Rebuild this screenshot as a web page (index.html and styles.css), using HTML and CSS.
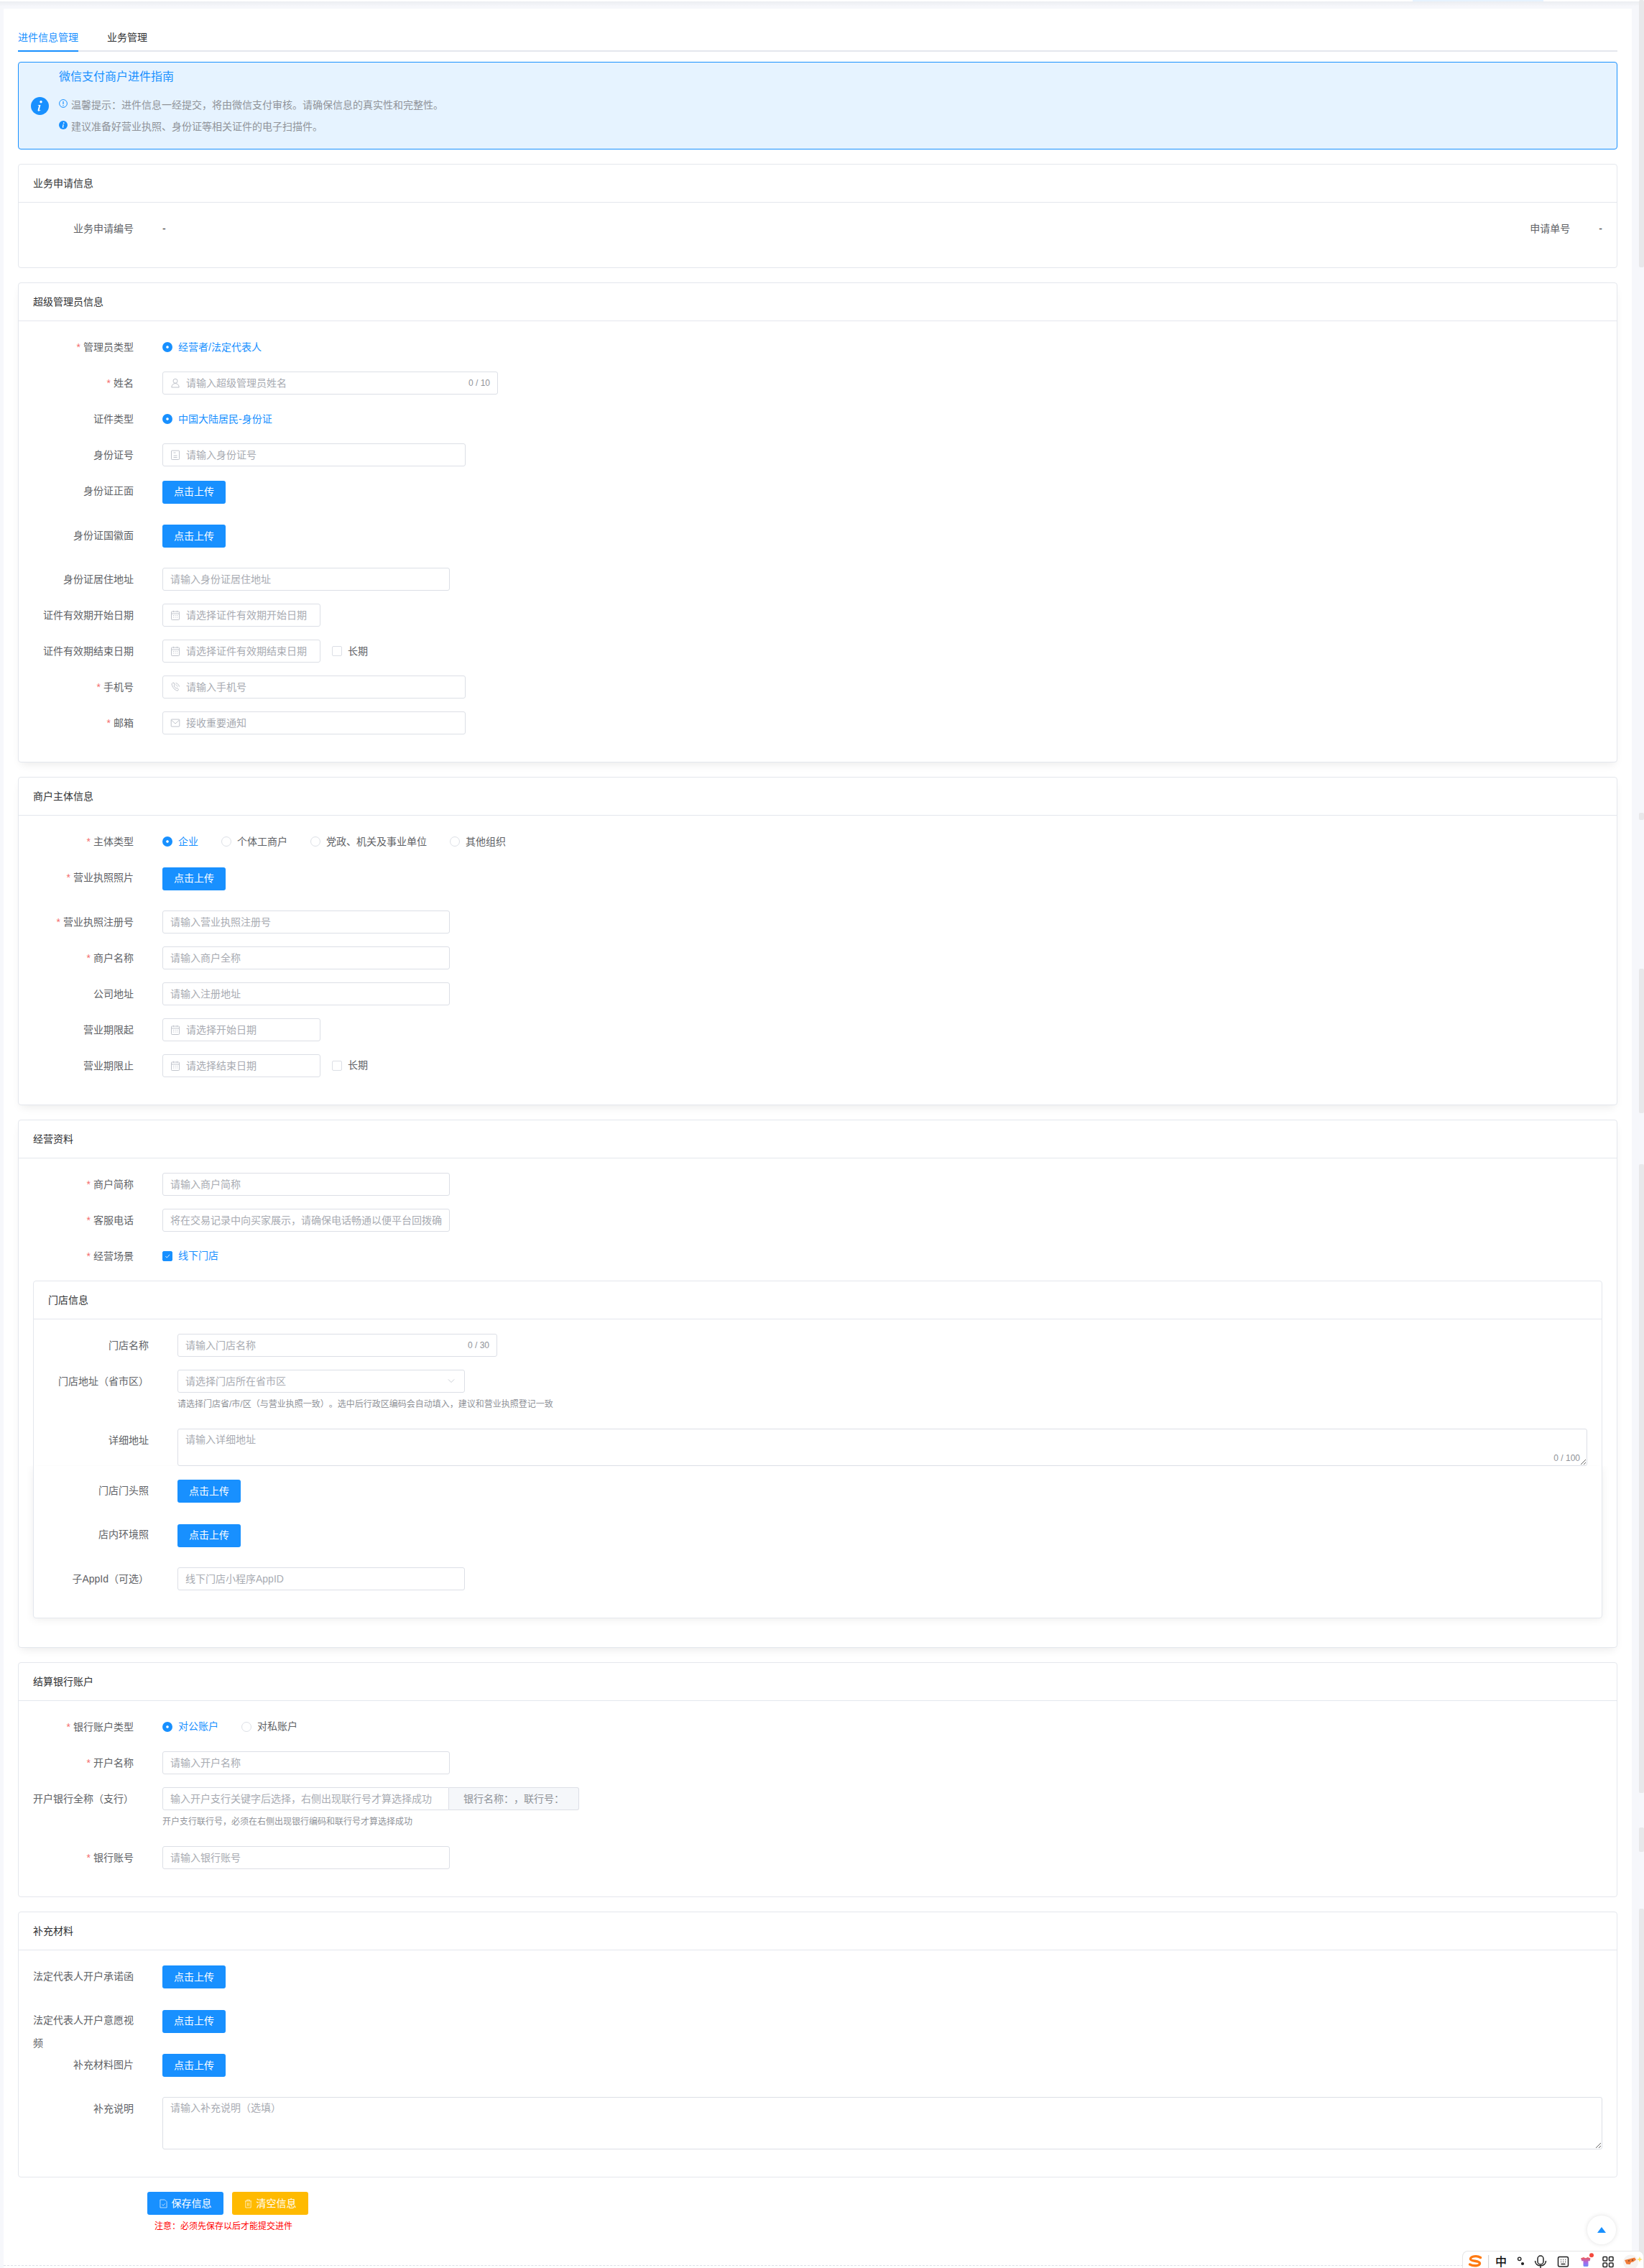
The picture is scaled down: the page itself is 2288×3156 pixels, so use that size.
FILE: index.html
```html
<!DOCTYPE html>
<html lang="zh-CN">
<head>
<meta charset="utf-8">
<title>进件信息管理</title>
<link rel="stylesheet" href="styles.css">
</head>
<body>
<svg class="sprite" aria-hidden="true">
  <symbol id="i-user" viewBox="0 0 14 14"><circle cx="7" cy="4.2" r="3" /><path d="M1.8 13c0-3.2 2.3-5.4 5.2-5.4s5.2 2.2 5.2 5.4z"/></symbol>
  <symbol id="i-doc" viewBox="0 0 14 14"><rect x="1.5" y="1" width="11" height="12.5" rx=".8"/><path d="M4.5 4h3M4.5 8h5M4.5 10.500h5"/></symbol>
  <symbol id="i-cal" viewBox="0 0 14 14"><rect x="1.500" y="2" width="11" height="11.500" rx=".8"/><path d="M1.500 5h11M4.500 .8v2M9.500 .8v2M4 7.500h1M6.500 7.500h1M9 7.500h1M4 10h1M6.500 10h1M9 10h1"/></symbol>
  <symbol id="i-phone" viewBox="0 0 14 14"><path d="M3 1.500 5 1l1.300 3-1.200 1c.5 1.500 1.500 3 3 4l1.200-.9 2.200 2.400-1.300 1.700C6 11.500 2.500 7 2 2.500z"/><path d="M7.500 1.500c2.500.3 4.500 2.300 5 5M7.500 4c1.300.2 2.300 1.200 2.600 2.500"/></symbol>
  <symbol id="i-mail" viewBox="0 0 14 14"><rect x="1.200" y="2" width="11.600" height="10" rx=".8"/><path d="M1.500 3 7 8l5.500-5"/></symbol>
  <symbol id="i-save" viewBox="0 0 12 14"><path d="M1 1h7l3 3v9H1z"/><path d="M3.800 8l1.700 1.800 2.800-3"/></symbol>
  <symbol id="i-trash" viewBox="0 0 12 14"><path d="M1 3h10M4 3V1.200h4V3M2 3v10h8V3M5 5.500v5M7 5.500v5"/></symbol>
</svg>

<div class="topbar"><span class="toptab"></span></div>

<main class="page">
  <nav class="tabs">
    <a class="tab active">进件信息管理</a>
    <a class="tab">业务管理</a>
  </nav>

  <section class="alert">
    <svg class="alert-icon" viewBox="0 0 25 25"><circle cx="12.500" cy="12.500" r="12.500" fill="#1890ff"/><circle cx="14" cy="6.800" r="1.700" fill="#fff"/><path d="M10 11h3.500l-1.800 7c-.1.600.4.700 1.700-.2l.2.500c-1.600 1.500-4.300 2.100-4-.1l1.500-5.800c-.3-.8-.8-.5-1.400-.4z" fill="#fff"/></svg>
    <div class="alert-body">
      <h2 class="alert-title">微信支付商户进件指南</h2>
      <p class="alert-line">
        <svg class="mini" viewBox="0 0 12 12"><circle cx="6" cy="6" r="5.400" fill="none" stroke="#1890ff" stroke-width="1"/><path d="M6 3v4" stroke="#1890ff" stroke-width="1.200"/><circle cx="6" cy="8.800" r=".7" fill="#1890ff"/></svg>
        <span>温馨提示&#xFF1A;进件信息一经提交&#xFF0C;将由微信支付审核。请确保信息的真实性和完整性。</span>
      </p>
      <p class="alert-line">
        <svg class="mini" viewBox="0 0 12 12"><circle cx="6" cy="6" r="6" fill="#1890ff"/><circle cx="6.700" cy="3.200" r=".9" fill="#fff"/><path d="M5 5.200h1.900L6 9.200l1-.4-.2.500c-1 .6-2.200.6-2-.3l.8-3.300-.7-.1z" fill="#fff"/></svg>
        <span>建议准备好营业执照、身份证等相关证件的电子扫描件。</span>
      </p>
    </div>
  </section>

  <section class="card">
    <header class="card-head">业务申请信息</header>
    <div class="card-body">
      <div class="row between">
        <div class="pair"><span class="label">业务申请编号</span><span class="value">-</span></div>
        <div class="pair"><span class="label">申请单号</span><span class="value">-</span></div>
      </div>
    </div>
  </section>

  <section class="card raised">
    <header class="card-head">超级管理员信息</header>
    <div class="card-body">
      <div class="row"><span class="label req">管理员类型</span><div class="choices"><label class="radio on"><i></i>经营者/法定代表人</label></div></div>
      <div class="row"><span class="label req">姓名</span><div class="input w467"><svg class="pre"><use href="#i-user"/></svg><input placeholder="请输入超级管理员姓名"><span class="count">0 / 10</span></div></div>
      <div class="row"><span class="label">证件类型</span><div class="choices"><label class="radio on"><i></i>中国大陆居民-身份证</label></div></div>
      <div class="row"><span class="label">身份证号</span><div class="input w422"><svg class="pre"><use href="#i-doc"/></svg><input placeholder="请输入身份证号"></div></div>
      <div class="row up"><span class="label">身份证正面</span><button class="btn-up">点击上传</button></div>
      <div class="row up"><span class="label">身份证国徽面</span><button class="btn-up">点击上传</button></div>
      <div class="row"><span class="label">身份证居住地址</span><div class="input w400"><input placeholder="请输入身份证居住地址"></div></div>
      <div class="row"><span class="label">证件有效期开始日期</span><div class="input w220"><svg class="pre"><use href="#i-cal"/></svg><input placeholder="请选择证件有效期开始日期"></div></div>
      <div class="row"><span class="label">证件有效期结束日期</span><div class="input w220"><svg class="pre"><use href="#i-cal"/></svg><input placeholder="请选择证件有效期结束日期"></div><label class="check long"><i></i>长期</label></div>
      <div class="row"><span class="label req">手机号</span><div class="input w422"><svg class="pre"><use href="#i-phone"/></svg><input placeholder="请输入手机号"></div></div>
      <div class="row"><span class="label req">邮箱</span><div class="input w422"><svg class="pre"><use href="#i-mail"/></svg><input placeholder="接收重要通知"></div></div>
    </div>
  </section>

  <section class="card raised">
    <header class="card-head">商户主体信息</header>
    <div class="card-body">
      <div class="row"><span class="label req">主体类型</span><div class="choices"><label class="radio on"><i></i>企业</label><label class="radio"><i></i>个体工商户</label><label class="radio"><i></i>党政、机关及事业单位</label><label class="radio"><i></i>其他组织</label></div></div>
      <div class="row up"><span class="label req">营业执照照片</span><button class="btn-up">点击上传</button></div>
      <div class="row"><span class="label req">营业执照注册号</span><div class="input w400"><input placeholder="请输入营业执照注册号"></div></div>
      <div class="row"><span class="label req">商户名称</span><div class="input w400"><input placeholder="请输入商户全称"></div></div>
      <div class="row"><span class="label">公司地址</span><div class="input w400"><input placeholder="请输入注册地址"></div></div>
      <div class="row"><span class="label">营业期限起</span><div class="input w220"><svg class="pre"><use href="#i-cal"/></svg><input placeholder="请选择开始日期"></div></div>
      <div class="row"><span class="label">营业期限止</span><div class="input w220"><svg class="pre"><use href="#i-cal"/></svg><input placeholder="请选择结束日期"></div><label class="check long"><i></i>长期</label></div>
    </div>
  </section>

  <section class="card raised holder">
    <header class="card-head">经营资料</header>
    <div class="card-body">
      <div class="row"><span class="label req">商户简称</span><div class="input w400"><input placeholder="请输入商户简称"></div></div>
      <div class="row"><span class="label req">客服电话</span><div class="input w400"><input placeholder="将在交易记录中向买家展示&#xFF0C;请确保电话畅通以便平台回拨确认"></div></div>
      <div class="row"><span class="label req">经营场景</span><div class="choices"><label class="check on"><i><svg viewBox="0 0 14 14"><path d="M4 7l2.200 2.500L10.500 4.500" fill="none" stroke="#fff" stroke-width="1"/></svg></i>线下门店</label></div></div>

      <section class="card store">
        <header class="card-head">门店信息</header>
        <div class="card-body">
          <div class="row"><span class="label">门店名称</span><div class="input w445"><input placeholder="请输入门店名称"><span class="count">0 / 30</span></div></div>
          <div class="row"><span class="label">门店地址&#xFF08;省市区&#xFF09;</span>
            <div class="stack">
              <div class="input w400"><input placeholder="请选择门店所在省市区"><svg class="chev" viewBox="0 0 12 8"><path d="M1 1.500l5 5 5-5" fill="none" stroke="#c0c4cc"/></svg></div>
              <p class="hint">请选择门店省/市/区&#xFF08;与营业执照一致&#xFF09;。选中后行政区编码会自动填入&#xFF0C;建议和营业执照登记一致</p>
            </div>
          </div>
          <div class="row"><span class="label">详细地址</span>
            <div class="area-wrap"><textarea class="area short" placeholder="请输入详细地址"></textarea><span class="count area-count">0 / 100</span></div>
          </div>
          <div class="row up"><span class="label">门店门头照</span><button class="btn-up">点击上传</button></div>
          <div class="row up"><span class="label">店内环境照</span><button class="btn-up">点击上传</button></div>
          <div class="row"><span class="label">子AppId&#xFF08;可选&#xFF09;</span><div class="input w400"><input placeholder="线下门店小程序AppID"></div></div>
        </div>
      </section>
    </div>
  </section>

  <section class="card">
    <header class="card-head">结算银行账户</header>
    <div class="card-body">
      <div class="row"><span class="label req">银行账户类型</span><div class="choices"><label class="radio on"><i></i>对公账户</label><label class="radio"><i></i>对私账户</label></div></div>
      <div class="row"><span class="label req">开户名称</span><div class="input w400"><input placeholder="请输入开户名称"></div></div>
      <div class="row"><span class="label">开户银行全称&#xFF08;支行&#xFF09;</span>
        <div class="stack">
          <div class="group">
            <div class="input w400 joined"><input placeholder="输入开户支行关键字后选择&#xFF0C;右侧出现联行号才算选择成功"></div>
            <div class="append">银行名称&#xFF1A;&#xFF0C;联行号&#xFF1A;</div>
          </div>
          <p class="hint">开户支行联行号&#xFF0C;必须在右侧出现银行编码和联行号才算选择成功</p>
        </div>
      </div>
      <div class="row"><span class="label req">银行账号</span><div class="input w400"><input placeholder="请输入银行账号"></div></div>
    </div>
  </section>

  <section class="card">
    <header class="card-head">补充材料</header>
    <div class="card-body">
      <div class="row up"><span class="label">法定代表人开户承诺函</span><button class="btn-up">点击上传</button></div>
      <div class="row up"><span class="label">法定代表人开户意愿视频</span><button class="btn-up">点击上传</button></div>
      <div class="row up"><span class="label">补充材料图片</span><button class="btn-up">点击上传</button></div>
      <div class="row"><span class="label">补充说明</span><div class="area-wrap"><textarea class="area tall" placeholder="请输入补充说明&#xFF08;选填&#xFF09;"></textarea></div></div>
    </div>
  </section>

  <div class="actions">
    <button class="btn save"><svg class="btn-ico"><use href="#i-save"/></svg>保存信息</button>
    <button class="btn clear"><svg class="btn-ico"><use href="#i-trash"/></svg>清空信息</button>
  </div>
  <p class="notice">注意&#xFF1A;必须先保存以后才能提交进件</p>
</main>
<div class="dash"></div>

<div class="scroll" aria-hidden="true">
  <span class="thumb t1"></span><span class="thumb t2"></span><span class="thumb t3"></span>
  <span class="thumb t4"></span><span class="thumb t5"></span><span class="thumb t6"></span>
</div>

<button class="totop" aria-label="top"><svg viewBox="0 0 12 8"><path d="M6 0l6 8H0z" fill="#1890ff"/></svg></button>

<div class="ime">
  <svg viewBox="0 0 253 24" width="253" height="24">
    <defs><linearGradient id="shirt" x1="0" y1="0" x2="0" y2="1"><stop offset="0" stop-color="#f2594f"/><stop offset=".55" stop-color="#a866e8"/><stop offset="1" stop-color="#6f8dfb"/></linearGradient></defs>
    <path d="M25.500 9.500C20 6 11.500 8 11.500 11.500c0 3.500 13 2 13 6 0 3.500-8.500 4.500-14 1.500" fill="none" stroke="#ff7a12" stroke-width="3.400" stroke-linecap="round"/>
    <path d="M36.700 6v18" stroke="#ccc"/>
    <text x="54" y="20.500" text-anchor="middle" class="ime-zh">中</text>
    <circle cx="79.700" cy="11.300" r="2.200" fill="none" stroke="#222" stroke-width="1.400"/>
    <circle cx="84" cy="18" r="2.100" fill="#222"/>
    <g fill="none" stroke="#222" stroke-width="1.500">
      <rect x="105" y="7" width="8" height="12" rx="4"/>
      <path d="M101.500 14c0 9 15 9 15 0M109 20.500V24"/>
      <rect x="133.500" y="8.500" width="14" height="13.500" rx="2"/>
      <path d="M137 12.500h.8M140 12.500h.8M143 12.500h.8M137 15.500h.8M140 15.500h.8M143 15.500h.8M137.500 18.500h6"/>
      <rect x="196" y="8.500" width="5.500" height="5.500" rx="1"/><rect x="204.500" y="8.500" width="5.500" height="5.500" rx="1"/>
      <rect x="196" y="17" width="5.500" height="5.500" rx="1"/><rect x="204.500" y="17" width="5.500" height="5.500" rx="1"/>
    </g>
    <path d="M165 10.500l4-1.500c1.500 1.500 4 1.500 5.500 0l4 1.500-1 4-2-.5v6.500c0 1.200-1 1.500-2 1.500h-3c-1 0-2-.5-2-1.500V14l-2 .5z" fill="url(#shirt)"/>
    <circle cx="180" cy="6.300" r="3" fill="#f4493c"/>
    <circle cx="234.500" cy="16" r="10.500" fill="#f6f3f1"/>
    <path d="M226 13l14-3.500 2 3-4 3-3 .5-1.500 3-5-.5z" fill="#f07b38"/>
    <path d="M231 14h2M236 13h2" stroke="#333" stroke-width="1"/>
    <path d="M247 8l1 3 3 1-3 1-1 3-1-3-3-1 3-1z" fill="#ffe066"/>
  </svg>
</div>
</body>
</html>
```

FILE: styles.css
```css
* { box-sizing: border-box; }

html, body {
  margin: 0;
  width: 2288px;
  height: 3156px;
  overflow: hidden;
}

body {
  position: relative;
  background: #f6f7fb;
  color: #606266;
  font: 14px/1.5 "Liberation Sans", "Noto Sans CJK SC", sans-serif;
  text-spacing-trim: space-all;
  font-feature-settings: "chws" 0;
}

.sprite { position: absolute; width: 0; height: 0; }

.topbar {
  height: 12px;
  position: relative;
  background: linear-gradient(#fff 0 2px, #eceef2 2px, #f6f7fb 9px);
}

.toptab {
  position: absolute;
  left: 1966px;
  top: 0;
  width: 182px;
  height: 2px;
  background: #e6f3ff;
}

.page {
  width: 2266px;
  height: 3140px;
  margin-left: 5px;
  padding: 20px;
  background: #fff;
}

.dash {
  width: 2266px;
  margin-left: 5px;
  height: 4px;
  background: #fff;
  border-top: 1px dashed #dcdfe6;
}

/* tabs */
.tabs {
  display: flex;
  gap: 40px;
  height: 40px;
  border-bottom: 2px solid #e4e7ed;
  margin-bottom: 14px;
}

.tab {
  height: 40px;
  line-height: 40px;
  color: #303133;
}

.tab.active {
  color: #1890ff;
  border-bottom: 2px solid #1890ff;
}

/* alert */
.alert {
  display: flex;
  align-items: center;
  gap: 14px;
  height: 122px;
  padding: 8px 17px;
  margin-bottom: 20px;
  background: #e6f3ff;
  border: 1px solid #1890ff;
  border-radius: 4px;
}

.alert-icon { width: 25px; height: 25px; flex: none; }

.alert-body { flex: 1; padding-bottom: 8px; }

.alert-title {
  margin: 0 0 13px;
  font-size: 16px;
  font-weight: 400;
  line-height: 23px;
  color: #1890ff;
}

.alert-line {
  display: flex;
  align-items: center;
  gap: 5px;
  margin: 0;
  height: 30px;
  color: #909399;
}

.mini { width: 12px; height: 12px; flex: none; position: relative; top: -2px; }

/* cards */
.card {
  background: #fff;
  border: 1px solid #e4e7ed;
  border-radius: 4px;
  margin-bottom: 20px;
}

.raised { box-shadow: 0 6px 12px -4px rgba(0, 0, 0, .09); }

.holder { position: relative; z-index: 0; }

.card-head {
  height: 53px;
  padding: 0 20px;
  line-height: 52px;
  color: #303133;
  border-bottom: 1px solid #e4e7ed;
}

.card-body { padding: 20px 20px 2px; margin-bottom: 18px; }

.store {
  position: relative;
  margin-bottom: 20px;
  background: transparent;
}

.store::after {
  content: "";
  position: absolute;
  left: 0;
  right: 0;
  top: 257px;
  bottom: 0;
  z-index: -1;
  box-shadow: 0 2px 12px rgba(0, 0, 0, .08);
  clip-path: inset(0 -20px -20px -20px);
}

/* form rows */
.row {
  display: flex;
  align-items: flex-start;
  min-height: 32px;
  margin-bottom: 18px;
}

.row.up { height: 43.500px; }

.between { justify-content: space-between; }

.pair { display: flex; }

.label {
  flex: none;
  display: flex;
  justify-content: flex-end;
  width: 140px;
  margin-right: 40px;
  line-height: 32px;
}

.req::before {
  content: "*";
  margin-right: 4px;
  color: #f56c6c;
}

.value {
  line-height: 32px;
  color: #303133;
}

/* inputs */
.input {
  display: flex;
  align-items: center;
  gap: 8px;
  height: 32px;
  padding: 0 10px;
  background: #fff;
  border: 1px solid #dcdfe6;
  border-radius: 3px;
}

.input input {
  flex: 1;
  min-width: 0;
  height: 30px;
  padding: 0;
  border: 0;
  outline: 0;
  background: transparent;
  color: #606266;
  font: inherit;
}

input::placeholder, textarea::placeholder { color: #a8abb2; opacity: 1; }

.w220 { width: 220px; }
.w400 { width: 400px; }
.w422 { width: 422px; }
.w445 { width: 445px; }
.w467 { width: 467px; }

.pre {
  flex: none;
  width: 14px;
  height: 14px;
  fill: none;
  stroke: #c0c4cc;
  stroke-width: 1;
}

.chev { flex: none; width: 10px; height: 7px; margin-right: 3px; }

.count {
  flex: none;
  font-size: 12px;
  color: #909399;
}

.stack { display: flex; flex-direction: column; }

.hint {
  margin: 0;
  font-size: 12px;
  line-height: 32px;
  color: #909399;
}

.group { display: flex; width: 580px; }

.joined { border-radius: 3px 0 0 3px; }

.append {
  flex: 1;
  height: 32px;
  padding: 0 20px;
  line-height: 30px;
  white-space: nowrap;
  color: #909399;
  background: #f5f7fa;
  border: 1px solid #dcdfe6;
  border-left: 0;
  border-radius: 0 3px 3px 0;
}

.area-wrap { position: relative; flex: 1; display: flex; }

.area {
  display: block;
  width: 100%;
  padding: 4px 10px;
  border: 1px solid #dcdfe6;
  border-radius: 3px;
  outline: 0;
  resize: both;
  color: #606266;
  font: inherit;
}

.short { height: 52px; }
.tall { height: 73px; }

.area-count {
  position: absolute;
  right: 10px;
  bottom: 2px;
}

/* radio + checkbox */
.choices {
  display: flex;
  gap: 32px;
  height: 32px;
  align-items: center;
}

.radio, .check {
  display: flex;
  align-items: center;
  gap: 8px;
  height: 32px;
}

.radio i, .check i {
  display: block;
  width: 14px;
  height: 14px;
  background: #fff;
  border: 1px solid #dcdfe6;
}

.radio i { border-radius: 50%; }
.check i { border-radius: 2px; }

.radio.on, .check.on { color: #1890ff; }

.radio.on i {
  background: #1890ff;
  border: 5px solid #1890ff;
  box-shadow: inset 0 0 0 2px #fff;
}

.check.on i { background: #1890ff; border-color: #1890ff; }
.check.on svg { display: block; width: 12px; height: 12px; }

.long { margin-left: 16px; }

/* buttons */
.btn-up {
  width: 88px;
  height: 32px;
  margin-top: 1.500px;
  padding: 0;
  border: 0;
  border-radius: 3px;
  background: #1890ff;
  color: #fff;
  font: inherit;
}

.actions {
  display: flex;
  gap: 12px;
  padding-left: 180px;
}

.btn {
  display: flex;
  align-items: center;
  justify-content: center;
  gap: 6px;
  width: 106px;
  height: 32px;
  padding: 0;
  border: 0;
  border-radius: 3px;
  color: #fff;
  font: inherit;
}

.save { background: #1890ff; }
.clear { background: #ffba00; }

.btn-ico {
  width: 11px;
  height: 13px;
  fill: none;
  stroke: rgba(255, 255, 255, .75);
  stroke-width: 1;
}

.notice {
  margin: 6px 0 0 190px;
  font-size: 12px;
  line-height: 20px;
  color: #f00;
}

/* overlays */
.scroll {
  position: absolute;
  left: 2281px;
  top: 0;
  width: 7px;
  height: 3156px;
}

.thumb {
  position: absolute;
  left: 0;
  width: 7px;
  background: #e8e8ea;
  border-radius: 2px;
}

.t1 { top: 0; height: 372px; }
.t2 { top: 1131px; height: 10px; }
.t3 { top: 1348px; height: 201px; }
.t4 { top: 1620px; height: 875px; }
.t5 { top: 2543px; height: 34px; }
.t6 { top: 2656px; height: 500px; }

.totop {
  position: absolute;
  left: 2209px;
  top: 3083px;
  display: flex;
  align-items: center;
  justify-content: center;
  width: 40px;
  height: 40px;
  padding: 0;
  border: 0;
  border-radius: 50%;
  background: #fff;
  box-shadow: 0 0 6px rgba(0, 0, 0, .12);
}

.totop svg { width: 12px; height: 8px; }

.ime {
  position: absolute;
  left: 2035px;
  top: 3132px;
  width: 253px;
  height: 24px;
  background: #fff;
  border: 1px solid #e6e6e6;
  border-bottom: 0;
  border-radius: 8px 8px 0 0;
  overflow: hidden;
}

.ime svg { display: block; position: absolute; left: -1px; top: -1px; }

.ime-zh {
  font: 500 16px "Noto Sans CJK SC", sans-serif;
  fill: #111;
}
```
